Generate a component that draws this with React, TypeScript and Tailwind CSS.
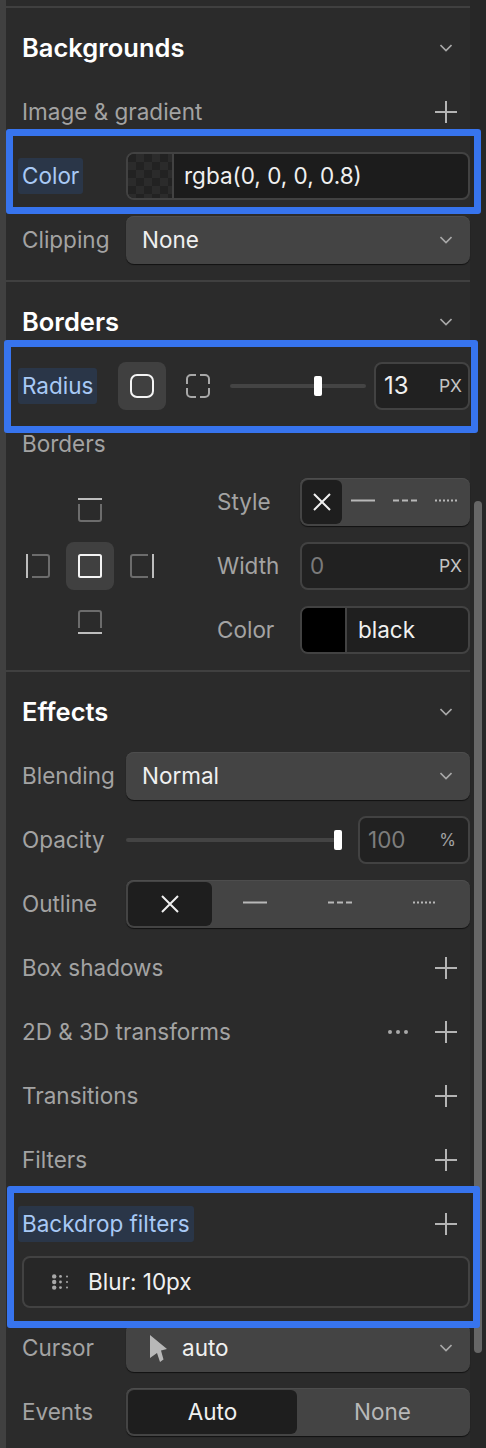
import React from "react";

const font = { fontFamily: "Inter, 'Liberation Sans', sans-serif" };

function Chevron() {
  return (
    <svg width="12" height="8" viewBox="0 0 12 8" fill="none" stroke="#a8a8a8" strokeWidth="1.6" className="shrink-0">
      <path d="M0.5 1l5.5 5.5L11.5 1" />
    </svg>
  );
}

function Plus() {
  return (
    <svg width="22" height="22" viewBox="0 0 22 22" stroke="#b4b4b4" strokeWidth="2" className="shrink-0">
      <path d="M11 0v22M0 11h22" />
    </svg>
  );
}

function Cross() {
  return (
    <svg width="18" height="18" viewBox="0 0 18 18" stroke="#f0f0f0" strokeWidth="2">
      <path d="M1 1l16 16M17 1L1 17" />
    </svg>
  );
}

function LineStyle({ dash }: { dash?: string }) {
  return (
    <svg width="24" height="24" viewBox="0 0 24 24" stroke="#b8b8b8" strokeWidth="2" fill="none">
      <path d="M0 10.5h24" strokeDasharray={dash} />
    </svg>
  );
}

function SideIcon({ side }: { side: "top" | "left" | "right" | "bottom" }) {
  const box = {
    top: "M1 6v15a2 2 0 0 0 2 2h18a2 2 0 0 0 2-2V6",
    bottom: "M1 18V3a2 2 0 0 1 2-2h18a2 2 0 0 1 2 2v15",
    left: "M6 1h15a2 2 0 0 1 2 2v18a2 2 0 0 1-2 2H6",
    right: "M18 1H3a2 2 0 0 0-2 2v18a2 2 0 0 0 2 2h15",
  }[side];
  const line = {
    top: "M0 1h24",
    bottom: "M0 23h24",
    left: "M1 0v24",
    right: "M23 0v24",
  }[side];
  return (
    <svg width="24" height="24" viewBox="0 0 24 24" fill="none" strokeWidth="2">
      <path d={box} stroke="#6c6c6c" />
      <path d={line} stroke="#bdbdbd" />
    </svg>
  );
}

function Section({ children }: { children: React.ReactNode }) {
  return <div className="flex flex-col gap-4 py-4 pl-4 border-b-2 border-[#404040]">{children}</div>;
}

function Label({ children, active }: { children: React.ReactNode; active?: boolean }) {
  return (
    <span
      className={
        active
          ? "-ml-[4px] px-[4px] w-fit h-[36px] flex items-center rounded-[3px] bg-[#2a3648] text-[#a8c9f5] whitespace-nowrap"
          : "text-[#a3a3a3] whitespace-nowrap"
      }
    >
      {children}
    </span>
  );
}

function Row({ children }: { children: React.ReactNode }) {
  return <div className="h-[48px] flex items-center justify-between">{children}</div>;
}

function Title({ children }: { children: React.ReactNode }) {
  return (
    <Row>
      <span className="text-[25.5px] font-semibold text-white">{children}</span>
      <span className="w-[24px] mr-[12px] flex justify-center">
        <Chevron />
      </span>
    </Row>
  );
}

function PlusRow({ label, dots }: { label: React.ReactNode; dots?: boolean }) {
  return (
    <Row>
      {label}
      <span className="flex items-center gap-[27px] mr-[13px]">
        {dots && (
          <svg width="20" height="4" viewBox="0 0 20 4" fill="#a8a8a8">
            <circle cx="2" cy="2" r="2" />
            <circle cx="10" cy="2" r="2" />
            <circle cx="18" cy="2" r="2" />
          </svg>
        )}
        <Plus />
      </span>
    </Row>
  );
}

function Select({ children }: { children: React.ReactNode }) {
  return (
    <div className="w-[344px] h-[48px] flex items-center justify-between pl-4 pr-[12px] rounded-[8px] bg-[#444444] text-[#f0f0f0] shadow-[0_1px_1px_rgba(0,0,0,0.6),inset_0_1px_0_#4d4d4d]">
      {children}
      <span className="w-[24px] flex justify-center">
        <Chevron />
      </span>
    </div>
  );
}

function Segmented({ className, children }: { className: string; children: React.ReactNode }) {
  return (
    <div className={"h-[48px] p-[2px] rounded-[8px] bg-[#444444] shadow-[0_1px_1px_rgba(0,0,0,0.6),inset_0_1px_0_#4d4d4d] grid " + className}>
      {children}
    </div>
  );
}

function Cell({ active, children }: { active?: boolean; children: React.ReactNode }) {
  return (
    <div className={"flex items-center justify-center rounded-[6px] " + (active ? "bg-[#1e1e1e] text-[#f0f0f0]" : "text-[#b8b8b8]")}>
      {children}
    </div>
  );
}

function Field({ className, children }: { className: string; children: React.ReactNode }) {
  return (
    <div className={"h-[48px] flex items-center justify-between rounded-[8px] border-2 border-[#424242] bg-[#212121] " + className}>
      {children}
    </div>
  );
}

export default function App() {
  return (
    <div style={font} className="relative w-[486px] h-[1448px] overflow-hidden flex bg-[#2b2b2b] text-[22.5px] leading-[24px]">
      <div className="w-[6px] bg-[#404040] shrink-0" />

      <div className="relative z-10 w-[464px] shrink-0 pt-[6px]">
        <div className="h-[2px] bg-[#404040]" />

        {/* Backgrounds */}
        <Section>
          <Title>Backgrounds</Title>
          <PlusRow label={<Label>Image &amp; gradient</Label>} />
          <div className="relative">
            <Row>
              <Label active>Color</Label>
              <div className="w-[344px] h-[48px] flex items-center rounded-[8px] border-2 border-[#424242] bg-[#1c1c1c] overflow-hidden">
                <div className="w-[46px] h-full shrink-0 border-r-2 border-[#424242] bg-[repeating-conic-gradient(#2b2b2b_0_25%,#222222_0_50%)] bg-[length:16px_16px]" />
                <span className="pl-[10px] text-[#f0f0f0]">rgba(0, 0, 0, 0.8)</span>
              </div>
            </Row>
            <div className="absolute -left-[16px] -right-[11px] -top-[23px] -bottom-[14px] border-[7px] border-[#3774ee] rounded-[3px]" />
          </div>
          <Row>
            <Label>Clipping</Label>
            <Select>None</Select>
          </Row>
        </Section>

        {/* Borders */}
        <Section>
          <Title>Borders</Title>
          <div className="relative">
            <div className="h-[48px] flex items-center">
              <div className="w-[96px]">
                <Label active>Radius</Label>
              </div>
              <div className="w-[48px] h-[48px] flex items-center justify-center rounded-[8px] bg-[#404040]">
                <svg width="24" height="24" viewBox="0 0 24 24" fill="none" stroke="#f4f4f4" strokeWidth="2">
                  <rect x="1" y="1" width="22" height="22" rx="6" />
                </svg>
              </div>
              <div className="w-[64px] flex justify-center">
                <svg width="24" height="24" viewBox="0 0 24 24" fill="none" stroke="#a8a8a8" strokeWidth="2">
                  <path d="M1 10V5a4 4 0 0 1 4-4h5M14 1h5a4 4 0 0 1 4 4v5M23 14v5a4 4 0 0 1-4 4h-5M10 23H5a4 4 0 0 1-4-4v-5" />
                </svg>
              </div>
              <div className="relative w-[136px] h-[4px] rounded-full bg-[#444444]">
                <div className="absolute left-[84px] -top-[8px] w-[8px] h-[20px] rounded-[2px] bg-white" />
              </div>
              <Field className="ml-[8px] w-[96px] pl-[8px] pr-[6px] text-[#f0f0f0] bg-[#1f1f1f]">
                <span className="text-[24px]">13</span>
                <span className="text-[17.5px] text-[#c4c4c4]">PX</span>
              </Field>
            </div>
            <div className="absolute -left-[18px] -right-[8px] -top-[22px] -bottom-[23px] border-[7px] border-[#3774ee] rounded-[3px]" />
          </div>

          <div className="h-[24px] mt-[6px] flex items-center">
            <Label>Borders</Label>
          </div>

          <div className="flex items-center mt-[6px]">
            <div className="w-[195px] shrink-0">
              <div className="-ml-[8px] grid grid-cols-[48px_48px_48px] grid-rows-[48px_48px_48px] gap-x-[4px] gap-y-[8px] place-items-center w-fit">
                <span />
                <SideIcon side="top" />
                <span />
                <SideIcon side="left" />
                <div className="w-[48px] h-[48px] flex items-center justify-center rounded-[8px] bg-[#404040]">
                  <svg width="24" height="24" viewBox="0 0 24 24" fill="none" stroke="#f4f4f4" strokeWidth="2">
                    <rect x="1" y="1" width="22" height="22" rx="1.5" />
                  </svg>
                </div>
                <SideIcon side="right" />
                <span />
                <SideIcon side="bottom" />
                <span />
              </div>
            </div>

            <div className="flex-1 flex flex-col gap-4">
              <div className="h-[48px] flex items-center justify-between">
                <Label>Style</Label>
                <Segmented className="w-[170px] grid-cols-[40px_1fr_1fr_1fr]">
                  <Cell active>
                    <Cross />
                  </Cell>
                  <Cell>
                    <LineStyle />
                  </Cell>
                  <Cell>
                    <LineStyle dash="6 3" />
                  </Cell>
                  <Cell>
                    <LineStyle dash="2 2" />
                  </Cell>
                </Segmented>
              </div>
              <div className="h-[48px] flex items-center justify-between">
                <Label>Width</Label>
                <Field className="w-[170px] pl-[8px] pr-[6px]">
                  <span className="text-[#7a7a7a]">0</span>
                  <span className="text-[17.5px] text-[#c4c4c4]">PX</span>
                </Field>
              </div>
              <div className="h-[48px] flex items-center justify-between">
                <Label>Color</Label>
                <div className="w-[170px] h-[48px] flex items-center rounded-[8px] border-2 border-[#424242] bg-[#1f1f1f] overflow-hidden">
                  <div className="w-[45px] h-full shrink-0 bg-black border-r-2 border-[#424242]" />
                  <span className="pl-[11px] text-[#f0f0f0]">black</span>
                </div>
              </div>
            </div>
          </div>
        </Section>

        {/* Effects */}
        <div className="flex flex-col gap-4 py-4 pl-4">
          <Title>Effects</Title>
          <Row>
            <Label>Blending</Label>
            <Select>Normal</Select>
          </Row>
          <Row>
            <Label>Opacity</Label>
            <div className="w-[344px] flex items-center">
              <div className="relative w-[216px] h-[4px] rounded-full bg-[#444444]">
                <div className="absolute left-[208px] -top-[8px] w-[8px] h-[20px] rounded-[2px] bg-white" />
              </div>
              <Field className="ml-[16px] w-[112px] pl-[8px] pr-[12px]">
                <span className="text-[#7d7d7d]">100</span>
                <span className="text-[17px] text-[#a3a3a3]">%</span>
              </Field>
            </div>
          </Row>
          <Row>
            <Label>Outline</Label>
            <Segmented className="w-[344px] grid-cols-[84px_1fr_1fr_1fr]">
              <Cell active>
                <Cross />
              </Cell>
              <Cell>
                <LineStyle />
              </Cell>
              <Cell>
                <LineStyle dash="6 3" />
              </Cell>
              <Cell>
                <LineStyle dash="2 2" />
              </Cell>
            </Segmented>
          </Row>
          <PlusRow label={<Label>Box shadows</Label>} />
          <PlusRow label={<Label>2D &amp; 3D transforms</Label>} dots />
          <PlusRow label={<Label>Transitions</Label>} />
          <PlusRow label={<Label>Filters</Label>} />

          <div className="relative flex flex-col gap-2">
            <PlusRow label={<Label active>Backdrop filters</Label>} />
            <div className="h-[52px] flex items-center rounded-[8px] border-2 border-[#424242] bg-[#272727] pl-[28px] text-[#f0f0f0]">
              <svg width="16" height="16" viewBox="0 0 16 16" fill="#a8a8a8" className="shrink-0">
                <circle cx="2.2" cy="2.4" r="2.2" />
                <circle cx="2.2" cy="8" r="2.2" />
                <circle cx="2.2" cy="13.6" r="2.2" />
                <circle cx="8.5" cy="2.4" r="1.4" />
                <circle cx="8.5" cy="8" r="1.4" />
                <circle cx="8.5" cy="13.6" r="1.4" />
                <circle cx="15" cy="2.4" r="1" />
                <circle cx="15" cy="8" r="1" />
                <circle cx="15" cy="13.6" r="1" />
              </svg>
              <span className="pl-[20px]">Blur: 10px</span>
            </div>
            <div className="absolute -left-[15px] -right-[10px] -top-[14px] -bottom-[20px] border-[7px] border-[#3774ee] rounded-[3px]" />
          </div>

          <Row>
            <Label>Cursor</Label>
            <div className="w-[344px] h-[48px] flex items-center justify-between pl-[24px] pr-[12px] rounded-[8px] bg-[#444444] text-[#f0f0f0] shadow-[0_1px_1px_rgba(0,0,0,0.6),inset_0_1px_0_#4d4d4d]">
              <span className="flex items-center gap-[15px]">
                <svg width="17" height="27" viewBox="0 0 17 27" fill="#b8b8b8" className="shrink-0">
                  <path d="M0 0l17 14-6 1.5 2.5 9-3.5 2.5-3-9L0 23z" />
                </svg>
                auto
              </span>
              <span className="w-[24px] flex justify-center">
                <Chevron />
              </span>
            </div>
          </Row>
          <Row>
            <Label>Events</Label>
            <Segmented className="w-[344px] grid-cols-[169px_1fr]">
              <Cell active>Auto</Cell>
              <Cell>None</Cell>
            </Segmented>
          </Row>
        </div>
      </div>

      <div className="relative flex-1 bg-[#272727]">
        <div className="absolute left-[4px] top-[501px] w-[8px] h-[852px] rounded-full bg-[#666666]" />
      </div>
    </div>
  );
}
